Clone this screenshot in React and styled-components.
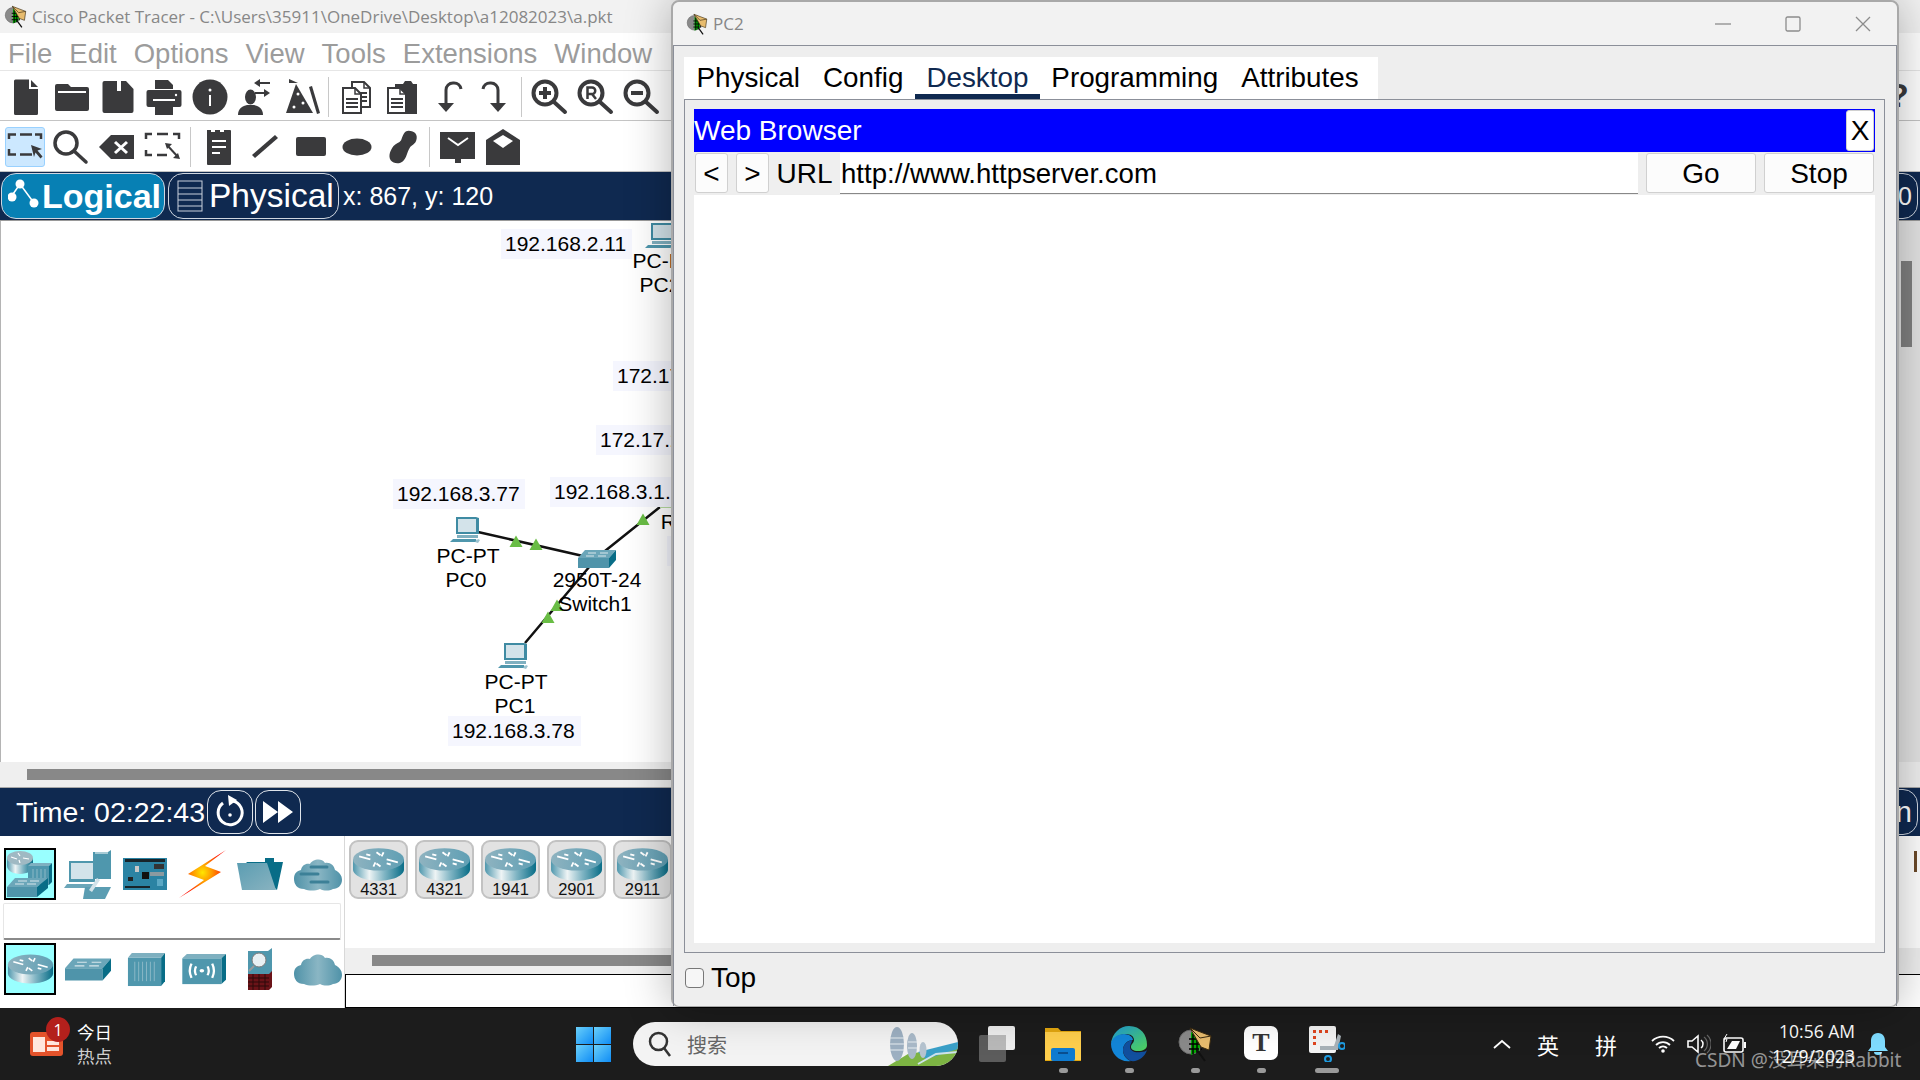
import React from 'react'
import styled, { createGlobalStyle } from 'styled-components'

const NAVY = '#0f2950'
const INK = '#3a3a3c'
const SANS = '"Liberation Sans", Arial, sans-serif'
const UI = '"Open Sans", "Noto Sans", "Noto Sans CJK SC", sans-serif'

const Global = createGlobalStyle`
  html, body { margin: 0; padding: 0; background: #1c1c1c; overflow: hidden; }
  * { box-sizing: border-box; }
`

const Desktop = styled.div`
  position: relative;
  width: 1920px;
  height: 1080px;
  display: flex;
  flex-direction: column;
  overflow: hidden;
  font-family: ${SANS};
`
const MainWindow = styled.div`
  height: 1008px;
  display: flex;
  flex-direction: column;
  background: #fff;
`
const TitleBar = styled.div`
  height: 33px;
  background: #f2f2f2;
  display: flex;
  align-items: center;
  gap: 5px;
  padding: 0 0 0 4px;
  flex: none;
`
const TitleText = styled.span`
  font-family: ${UI};
  font-size: 17px;
  color: #878787;
  white-space: nowrap;
`
const MenuBar = styled.div`
  height: 38px;
  flex: none;
  display: flex;
  align-items: center;
  gap: 17px;
  padding: 4px 0 0 8px;
  font-size: 27.500px;
  color: #9c9c9c;
  border-bottom: 1px solid #e6e6e6;
`
const Toolbar = styled.div`
  height: ${p => p.$h}px;
  flex: none;
  display: flex;
  align-items: center;
  padding: 2px 0 0 ${p => p.$pad}px;
  border-bottom: 1px solid #c4c4c4;
  position: relative;
`
const ToolSlot = styled.div`
  width: 46px;
  height: 40px;
  display: flex;
  align-items: center;
  justify-content: center;
  flex: none;
`
const ToolActive = styled.div`
  width: 40px;
  height: 40px;
  background: #cce8ff;
  border: 1px solid #99d1ff;
  border-radius: 3px;
  display: flex;
  align-items: center;
  justify-content: center;
  overflow: hidden;
`
const Sep = styled.div`
  width: 1px;
  height: 40px;
  background: #c8c8c8;
  margin: 0 ${p => p.$r}px 0 ${p => p.$l}px;
  flex: none;
`
const HelpMark = styled.span`
  position: absolute;
  left: 1888px;
  top: 5px;
  font-size: 34px;
  font-weight: bold;
  color: ${INK};
`
const ModeBar = styled.div`
  height: 48px;
  flex: none;
  background: ${NAVY};
  display: flex;
  align-items: center;
  padding: 0 0 0 1px;
  gap: 3px;
  position: relative;
`
const ModeButton = styled.div`
  height: 46px;
  width: ${p => p.$w}px;
  border-radius: 15px;
  border: 1px solid #cfd6e0;
  background: ${p => (p.$on ? '#0780b4' : NAVY)};
  color: #fff;
  display: flex;
  align-items: center;
  gap: ${p => p.$gap}px;
  padding-left: ${p => p.$pad}px;
  font-size: ${p => (p.$on ? 34 : 33.5)}px;
  font-weight: ${p => (p.$on ? 'bold' : 'normal')};
`
const Coords = styled.span`
  font-size: 25px;
  color: #fff;
  margin-left: 1px;
`
const EdgeButton = styled.div`
  position: absolute;
  left: 1870px;
  top: 1px;
  width: 48px;
  height: 46px;
  border: 1px solid #cfd6e0;
  border-radius: 15px;
  color: #fff;
  font-size: ${p => p.$fs}px;
  display: flex;
  align-items: center;
  justify-content: flex-end;
  padding-right: 5px;
`
const Workspace = styled.div`
  height: 542px;
  flex: none;
  display: flex;
  border-top: 1px solid #9a9a9a;
`
const Canvas = styled.div`
  position: relative;
  flex: 1;
  background: #fff;
  border-left: 1px solid #b4b4b4;
  overflow: hidden;
`
const VScroll = styled.div`
  width: 22px;
  flex: none;
  background: #e3e3e3;
  padding: 40px 8px 0 3px;
`
const VThumb = styled.div`
  height: 86px;
  background: #808080;
`
const HScroll = styled.div`
  height: ${p => p.$h}px;
  flex: none;
  background: #efefef;
  padding: ${p => p.$top}px 22px 0 ${p => p.$left}px;
  border-bottom: ${p => p.$line};
`
const HThumb = styled.div`
  height: 11px;
  background: #888;
`
const Links = styled.svg`
  position: absolute;
  left: -1px;
  top: -221px;
  width: 700px;
  height: 760px;
  pointer-events: none;
`
const IpLabel = styled.div`
  position: absolute;
  left: ${p => p.$x - 1}px;
  top: ${p => p.$y - 221}px;
  width: ${p => p.$w}px;
  height: 30px;
  padding-left: 4px;
  background: #f5f6fe;
  font-size: 21px;
  line-height: 30px;
  color: #000;
  white-space: nowrap;
`
const NodeText = styled.div`
  position: absolute;
  left: ${p => p.$cx - 1}px;
  top: ${p => p.$cy - 221 - 12}px;
  transform: translateX(-50%);
  font-size: 21px;
  line-height: 24px;
  color: #000;
  white-space: nowrap;
`
const NodeIcon = styled.div`
  position: absolute;
  left: ${p => p.$x - 1}px;
  top: ${p => p.$y - 221}px;
  line-height: 0;
`
const TimeBar = styled.div`
  height: 48px;
  flex: none;
  background: ${NAVY};
  display: flex;
  align-items: center;
  padding-left: 16px;
  gap: 2px;
  font-size: 28.500px;
  color: #fff;
  position: relative;
`
const RoundButton = styled.div`
  width: 46px;
  height: 44px;
  border: 1px solid #dfe4ea;
  border-radius: 14px;
  display: flex;
  align-items: center;
  justify-content: center;
`
const Palette = styled.div`
  flex: 1;
  display: flex;
  position: relative;
  background: #fff;
`
const PaletteLeft = styled.div`
  width: 345px;
  flex: none;
  display: flex;
  flex-direction: column;
  padding: 12px 3px 0 3px;
  gap: 3px;
  border-right: 1px solid #d8d8d8;
`
const IconRow = styled.div`
  display: grid;
  grid-template-columns: repeat(6, 57.500px);
  height: 52px;
  margin-left: 1px;
`
const IconCell = styled.div`
  display: flex;
  align-items: center;
  justify-content: center;
  width: 52px;
  height: 52px;
  background: ${p => (p.$on ? '#99ffff' : 'transparent')};
  border: ${p => (p.$on ? '2px solid #000' : 'none')};
`
const SearchField = styled.div`
  height: 37px;
  background: #fff;
  border: 1px solid #e6e6e6;
  border-bottom: 2px solid #8a8a8a;
  border-radius: 2px;
`
const PaletteRight = styled.div`
  flex: 1;
  display: flex;
  flex-direction: column;
`
const ModelRow = styled.div`
  height: 112px;
  display: flex;
  gap: 7px;
  padding: 4px 0 0 4px;
`
const ModelButton = styled.div`
  width: 59px;
  height: 59px;
  background: #e2e2e2;
  border: 2px solid #c2c2c2;
  border-radius: 9px;
  display: flex;
  flex-direction: column;
  align-items: center;
  padding-top: 5px;
  font-size: 16.500px;
  line-height: 15px;
  color: #111;
  gap: 0;
`
const BlackBox = styled.div`
  height: 34px;
  border-top: 1px solid #000;
  border-left: 1px solid #000;
  border-bottom: 1px solid #000;
`
const EdgeTick = styled.div`
  position: absolute;
  left: 1914px;
  top: 15px;
  width: 3px;
  height: 21px;
  background: #6b4a2a;
`
const PcWindow = styled.div`
  position: absolute;
  left: 671px;
  top: 0;
  width: 1228px;
  height: 1007px;
  background: #eee;
  border: 2px solid #a9a9a9;
  border-bottom-width: 1px;
  border-radius: 8px;
  box-shadow: 0 0 46px rgba(0, 0, 0, 0.3);
  display: flex;
  flex-direction: column;
`
const PcTitle = styled.div`
  height: 44px;
  flex: none;
  background: #f2f2f2;
  border-bottom: 1px solid #8b8f99;
  border-radius: 7px 7px 0 0;
  display: flex;
  align-items: center;
  padding-left: 13px;
  gap: 5px;
`
const WinControls = styled.div`
  margin-left: auto;
  display: flex;
  align-items: center;
  margin-right: 26px;
  gap: 54px;
`
const PcBody = styled.div`
  flex: 1;
  display: flex;
  flex-direction: column;
  padding: 11px 11px 0 10px;
  border-left: 1px solid #8b8f99;
  border-right: 1px solid #8b8f99;
`
const Tabs = styled.div`
  height: 42px;
  width: 694px;
  flex: none;
  background: #fff;
  display: flex;
  padding-left: 1px;
`
const Tab = styled.div`
  height: 42px;
  padding: 0 11.500px;
  font-size: 27.800px;
  line-height: 42px;
  color: ${p => (p.$on ? NAVY : '#000')};
  border-bottom: ${p => (p.$on ? `5px solid ${NAVY}` : 'none')};
`
const Panel = styled.div`
  height: 854px;
  flex: none;
  border: 1px solid #8b8f99;
  padding: 9px;
  display: flex;
  flex-direction: column;
`
const BrowserHead = styled.div`
  height: 43px;
  flex: none;
  background: #0000ff;
  color: #fff;
  font-size: 28px;
  display: flex;
  align-items: center;
  padding-right: 1px;
`
const CloseButton = styled.div`
  margin-left: auto;
  width: 28px;
  height: 41px;
  background: #fff;
  border: 1px solid #d0d0d0;
  border-radius: 3px;
  color: #000;
  font-size: 28px;
  display: flex;
  align-items: center;
  justify-content: center;
`
const UrlRow = styled.div`
  height: 43px;
  flex: none;
  display: flex;
  padding: 1px 1px 0 1px;
  font-size: 28px;
`
const PushButton = styled.div`
  width: ${p => p.$w}px;
  height: 40px;
  margin-right: ${p => p.$mr || 0}px;
  flex: none;
  background: #fcfcfc;
  border: 1px solid #d0d0d0;
  border-radius: 3px;
  display: flex;
  align-items: center;
  justify-content: center;
  color: #000;
  padding-top: 2px;
`
const UrlLabel = styled.div`
  width: 71px;
  margin-left: -8px;
  flex: none;
  height: 41px;
  background: #efefef;
  display: flex;
  align-items: center;
  justify-content: center;
`
const UrlInput = styled.div`
  flex: 1;
  height: 41px;
  background: #fff;
  border-bottom: 1px solid #888;
  margin-right: 8px;
  padding: 2px 0 0 1px;
  display: flex;
  align-items: center;
  font-size: 27.600px;
`
const Page = styled.div`
  flex: 1;
  background: #fff;
`
const PcFooter = styled.div`
  flex: 1;
  display: flex;
  align-items: center;
  gap: 7px;
  font-size: 28px;
  color: #000;
  padding: 0 0 4px 1px;
`
const Check = styled.div`
  width: 19px;
  height: 20px;
  background: #f6f6f6;
  border: 1px solid #777;
  border-radius: 4px;
`
const Taskbar = styled.div`
  height: 72px;
  flex: none;
  background: #1c1c1c;
  display: flex;
  align-items: center;
  padding-left: 30px;
  color: #fff;
`
const NewsWidget = styled.div`
  width: 82px;
  flex: none;
  display: flex;
  gap: 14px;
  position: relative;
  align-items: center;
`
const Badge = styled.span`
  position: absolute;
  left: 16px;
  top: -3px;
  width: 24px;
  height: 25px;
  border-radius: 50%;
  background: #b3201c;
  color: #fff;
  font-size: 16px;
  font-family: ${UI};
  display: flex;
  align-items: center;
  justify-content: center;
`
const NewsText = styled.div`
  font-family: "Noto Sans CJK SC", sans-serif;
  font-size: 17.500px;
  line-height: 24px;
  white-space: nowrap;
`
const NewsSub = styled.div`
  color: #cfcfcf;
`
const StartSlot = styled.div`
  margin-left: 464px;
  line-height: 0;
  flex: none;
`
const SearchPill = styled.div`
  margin-left: 22px;
  width: 325px;
  height: 44px;
  flex: none;
  background: #f3f3f3;
  border-radius: 22px;
  display: flex;
  align-items: center;
  padding-left: 15px;
  gap: 15px;
  overflow: hidden;
  color: #666;
  font-family: "Noto Sans CJK SC", sans-serif;
  font-size: 20px;
`
const SearchArt = styled.div`
  margin-left: auto;
  line-height: 0;
`
const TaskIcons = styled.div`
  margin-left: 6px;
  display: flex;
  flex: none;
`
const TaskSlot = styled.div`
  width: 66px;
  height: 72px;
  padding-top: 18px;
  display: flex;
  flex-direction: column;
  align-items: center;
  gap: 6px;
`
const TaskDot = styled.span`
  width: ${p => p.$w || 9}px;
  height: 5px;
  border-radius: 3px;
  background: ${p => (p.$hide ? 'transparent' : '#9a9a9a')};
`
const TextTile = styled.div`
  width: 34px;
  height: 34px;
  background: #fff;
  border-radius: 7px;
  color: #333;
  font-family: "Liberation Serif", serif;
  font-size: 26px;
  line-height: 34px;
  text-align: center;
  font-weight: bold;
  margin-bottom: 2px;
`
const Tray = styled.div`
  margin-left: auto;
  display: flex;
  align-items: center;
  padding-right: 32px;
`
const TraySlot = styled.div`
  width: ${p => p.$w}px;
  margin-left: ${p => p.$ml || 0}px;
  display: flex;
  align-items: center;
  justify-content: center;
  font-family: "Noto Sans CJK SC", sans-serif;
  font-size: 22px;
  line-height: 0;
`
const TrayGlyph = styled.span`
  line-height: 28px;
`
const Clock = styled.div`
  width: 102px;
  text-align: right;
  font-family: ${UI};
  font-size: 17.500px;
  line-height: 25px;
  margin-top: -1px;
`
const Watermark = styled.div`
  position: absolute;
  left: 1695px;
  top: 1047px;
  font-family: "Noto Sans", "Noto Sans CJK SC", sans-serif;
  font-size: 19px;
  line-height: 26px;
  color: rgba(255, 255, 255, 0.55);
  white-space: nowrap;
`

const Gradients = () => (
  <svg width="0" height="0" style={{ position: 'absolute' }}>
    <defs>
      <linearGradient id="cyl" x1="0" x2="1" y1="0" y2="0">
        <stop offset="0" stopColor="#4f97ad" />
        <stop offset="0.32" stopColor="#eef4f5" />
        <stop offset="0.62" stopColor="#7fb4c3" />
        <stop offset="1" stopColor="#086d87" />
      </linearGradient>
      <linearGradient id="cylTop" x1="0" x2="1" y1="0" y2="0">
        <stop offset="0" stopColor="#8fb3c0" />
        <stop offset="1" stopColor="#5f9fb4" />
      </linearGradient>
      <linearGradient id="teal" x1="0" x2="1" y1="0" y2="1">
        <stop offset="0" stopColor="#5b9db2" />
        <stop offset="1" stopColor="#89b3c0" />
      </linearGradient>
      <linearGradient id="cloudFill" x1="0" x2="1" y1="0" y2="0">
        <stop offset="0" stopColor="#4f92a8" />
        <stop offset="0.5" stopColor="#8ab6c4" />
        <stop offset="1" stopColor="#4f92a8" />
      </linearGradient>
      <radialGradient id="bolt" cx="0.5" cy="0.47" r="0.5">
        <stop offset="0" stopColor="#ffe600" />
        <stop offset="0.4" stopColor="#ff9900" />
        <stop offset="1" stopColor="#ff0d00" />
      </radialGradient>
      <linearGradient id="edgeA" x1="0" x2="1" y1="0" y2="1">
        <stop offset="0" stopColor="#1f9bd8" />
        <stop offset="1" stopColor="#50d35a" />
      </linearGradient>
      <linearGradient id="startBlue" x1="0" x2="1" y1="0" y2="1">
        <stop offset="0" stopColor="#6ad0fa" />
        <stop offset="1" stopColor="#0f8cf5" />
      </linearGradient>
    </defs>
  </svg>
)

const Glyph = ({ children }) => (
  <svg viewBox="0 0 40 40" width="40" height="40" fill={INK} style={{ flex: 'none' }}>{children}</svg>
)
const Line = props => <path fill="none" stroke={INK} {...props} />

const toolsA = [
  <><path d="M8 4a1.500 1.500 0 0 1 1.500-1.500H23v9.500h9v24.500a1.500 1.500 0 0 1-1.500 1.500h-21A1.500 1.500 0 0 1 8 36.500Z" /><path d="M25 3l7 7h-7z" /></>,
  <><path d="M3 9a2 2 0 0 1 2-2h11l3 3h16a2 2 0 0 1 2 2v20a2 2 0 0 1-2 2H5a2 2 0 0 1-2-2z" /><rect x="6" y="14" width="28" height="2" fill="#fff" /></>,
  <><path d="M6.500 4H28l7.500 8v22a2 2 0 0 1-2 2h-27a2 2 0 0 1-2-2V6a2 2 0 0 1 2-2z" /><rect x="19" y="4" width="4" height="10" fill="#fff" /></>,
  <><path d="M11 3h13l5 5v4H11z" /><rect x="2.500" y="13" width="35" height="17" rx="2" /><rect x="9" y="22" width="22" height="2" fill="#fff" /><rect x="11" y="25" width="18" height="13" /><circle cx="32" cy="18" r="1.200" fill="#fff" /></>,
  <><circle cx="20" cy="20" r="17.500" /><rect x="19" y="18" width="2" height="11" fill="#fff" /><circle cx="20" cy="13" r="1.500" fill="#fff" /></>,
  <><ellipse cx="14.500" cy="20" rx="5.500" ry="7.500" /><path d="M2 38c0-7 5-9 9-10h7c4 1 9 3 9 10z" /><path d="M18 6l6-4v3h10v2H24v3zM34 16l-6-4v3H19v2h9v3z" /></>,
  <><path d="M14 7L31 36H4z" /><path d="M16 6L7 2v4z" /><path d="M27 10l3-1 8 27-3 1z" /><circle cx="16" cy="17" r="1.500" fill="#fff" /><circle cx="21" cy="26" r="1.500" fill="#fff" /><circle cx="12" cy="30" r="1.500" fill="#fff" /></>
]
const Doc = ({ x, y, fill = '#fff' }) => (
  <g transform={`translate(${x} ${y})`}>
    <path d="M1 1h12l6 6v19H1z" fill={fill} stroke={INK} strokeWidth="2" />
    <path d="M13 1v6h6" fill="none" stroke={INK} strokeWidth="1.500" />
    <path d="M4 12h12M4 16h12M4 20h12" stroke={INK} strokeWidth="2" />
  </g>
)
const toolsB = [
  <><Doc x="14" y="4" /><Doc x="5" y="10" /></>,
  <><path d="M12 7h8l2-3h6l2 3h4v30H12z" /><Doc x="4" y="10" /></>,
  <><Line d="M32 12a7 7 0 0 0-7-6h-1a7 7 0 0 0-7 7v17" strokeWidth="3" /><path d="M9 26h16l-8 9z" /></>,
  <><Line d="M8 12a7 7 0 0 1 7-6h1a7 7 0 0 1 7 7v17" strokeWidth="3" /><path d="M15 26h16l-8 9z" /></>
]
const Mag = ({ children }) => (
  <>
    <circle cx="15" cy="16" r="11.500" fill="none" stroke={INK} strokeWidth="4" />
    <Line d="M24 25l11 10" strokeWidth="4" strokeLinecap="round" />
    {children}
  </>
)
const toolsC = [
  <Mag><path d="M9 16h12M15 10v12" stroke={INK} strokeWidth="4" /></Mag>,
  <Mag><Line d="M11.500 22V10.500h4.500a3 3 0 0 1 0 6.500h-4.500M16 17l4 5" strokeWidth="2.500" /></Mag>,
  <Mag><path d="M9 16h12" stroke={INK} strokeWidth="4" /></Mag>
]
const toolsD = [
  <><Line d="M4 12V7.500h7M15 7.500h12M30 7.500h6v4.500M4 22v5.500h7M15 27.500h12" strokeWidth="2.500" /><path d="M26 18l11 4-4.500 1.500 5 6-2 2-5-6-1.500 4.500z" /></>,
  <><circle cx="15" cy="16" r="11" fill="none" stroke={INK} strokeWidth="3.500" /><Line d="M23 24l12 11" strokeWidth="3.500" strokeLinecap="round" /></>,
  <><path d="M2 20L14 8h23v24H14z" /><path d="M18 15l12 11M30 15L18 26" stroke="#fff" strokeWidth="3" /></>,
  <><Line d="M3 12V7h6M14 7h11M30 7h6v5M3 23v5h6M14 28h10" strokeWidth="2.500" /><Line d="M24 18l11 12" strokeWidth="2" /><path d="M22 16l7 1-5 5zM37 32l-7-1 5-5z" /></>
]
const toolsE = [
  <><path d="M8 3h4v2h4V3h5v2h4V3h6a1 1 0 0 1 1 1v33a1 1 0 0 1-1 1H9a1 1 0 0 1-1-1V4z" /><path d="M13 14h14M13 20h14M13 26h8" stroke="#fff" strokeWidth="2" /></>,
  <path d="M32 10l3 3-23 20-3-3z" transform="translate(-2 -2)" />,
  <rect x="5" y="10" width="30" height="19" rx="2" />,
  <ellipse cx="20" cy="20" rx="14.500" ry="8.500" />,
  <path d="M26 3c6 0 10 4 8 10-1 4-5 5-7 8-3 5-3 10-7 14-3 3-10 3-13-1-3-5 0-11 3-15 3-3 6-3 8-6 2-5 3-10 8-10z" transform="translate(1 1) scale(0.95)" />
]
const toolsF = [
  <><path d="M3 5h35v27H24v4h-6v-4H3z" /><path d="M11 11l10 7 10-7" fill="none" stroke="#fff" strokeWidth="2" /></>,
  <><path d="M3 13L20 2l17 11v25H3z" /><path d="M10 14L20 8l10 6-10 7z" fill="#fff" /></>
]

const PtIcon = ({ size }) => (
  <svg viewBox="0 0 36 36" width={size} height={size}>
    <circle cx="14" cy="16" r="12" fill="#8a8a8a" stroke="#6a6a6a" />
    <path d="M14 6l11 6-3 13-8 4z" fill="#0a0" />
    <path d="M16 8v20M20 10v17M24 12v12M12 13h13M12 18h12M12 23h10" stroke="#000" strokeWidth="1.400" />
    <path d="M20 24l8 11" stroke="#111" strokeWidth="2" />
    <path d="M13 2l21 8-2 14-8-3-7-12z" fill="#e8bc6e" stroke="#3a2a10" strokeWidth="1" />
    <path d="M13 2l10 10 11-2" fill="none" stroke="#3a2a10" strokeWidth="1" />
  </svg>
)
const PcArt = ({ w = 30, h = 27 }) => (
  <svg viewBox="0 0 30 27" width={w} height={h}>
    <path d="M6 0h20l3 1v16H6z" fill="#3f8ba3" />
    <rect x="8" y="2" width="18" height="13" fill="#d3e3ea" />
    <path d="M7 18h21v3H7z" fill="#7fb0c0" />
    <path d="M3 22h23l1 3H0z" fill="#4f97ad" />
    <path d="M25 25l3-3 2 1-2 3z" fill="#9cc2ce" />
  </svg>
)
const SwitchArt = ({ w = 38, h = 18 }) => (
  <svg viewBox="0 0 38 18" width={w} height={h}>
    <path d="M7 0h31L31 8H0z" fill="#6ba6b9" />
    <path d="M0 8h31v10H0z" fill="#4f94aa" />
    <path d="M31 8l7-8v10l-7 8z" fill="#086d87" />
    <path d="M10 3h8M22 3h8M8 6h8M20 6h8" stroke="#d8e6eb" strokeWidth="1" />
  </svg>
)
const RouterArt = ({ w = 52, h = 34 }) => (
  <svg viewBox="0 0 52 34" width={w} height={h}>
    <path d="M1 12v10c0 6 11 11 25 11s25-5 25-11V12Z" fill="url(#cyl)" />
    <ellipse cx="26" cy="12" rx="25" ry="11" fill="url(#cylTop)" />
    <path d="M7 9l11 3M14 7l4 1M45 15l-11-3M38 17l-4-1M24 5l4 3M28 19l-4-3M31 5l-2 4M21 19l2-4" stroke="#fff" strokeWidth="1.800" fill="none" />
  </svg>
)
const Cloud = ({ bars }) => (
  <svg viewBox="0 0 48 34" width="48" height="34">
    <path d="M10 32C3 32 0 27 0 22c0-6 3-8 7-9 1-5 5-7 9-6 2-4 11-7 15-1 5-1 9 2 10 7 4 2 7 5 7 10 0 5-4 9-9 9-4 2-9 2-13 0-5 2-11 2-16 0z" fill="url(#cloudFill)" />
    {bars && <path d="M17 10h16M7 17h17M17 25h17" stroke="#3c8097" strokeWidth="3" strokeLinecap="round" />}
  </svg>
)
const Box3d = ({ children, w = 40, h = 36 }) => (
  <svg viewBox="0 0 40 36" width={w} height={h} preserveAspectRatio="none">
    <path d="M2 6l4-5h34l-4 5z" fill="#7eb0c0" />
    <path d="M36 6l4-5v29l-4 5z" fill="#086d87" />
    <rect x="2" y="6" width="34" height="29" fill="#4f97ad" />
    {children}
  </svg>
)

const palTop = [
  <svg viewBox="0 0 48 48" width="48" height="48">
    <path d="M1 8v8c0 4.400 5.800 8 13 8s13-3.600 13-8V8z" fill="url(#cyl)" />
    <ellipse cx="14" cy="8" rx="13" ry="7" fill="#9fb9c3" />
    <path d="M5 7l6 2M23 9l-6-1M12 3l2 3M14 13l-1-3" stroke="#fff" strokeWidth="1.200" />
    <g transform="translate(22 13)"><path d="M0 3l3-3h21l-3 3z" fill="#7eb0c0" /><path d="M21 3l3-3v19l-3 3z" fill="#086d87" /><rect y="3" width="21" height="19" fill="#4f97ad" /><path d="M5 6v13M9 6v13M13 6v13M17 6v13" stroke="#8bb8c6" /></g>
    <path d="M9 28h33l-11 9H1z" fill="#6ba6b9" />
    <path d="M1 37h30v10H1z" fill="#4f94aa" />
    <path d="M31 37l11-9v10l-11 9z" fill="#086d87" />
    <path d="M12 31h9M24 31h9M9 34h9M21 34h9" stroke="#d8e6eb" />
  </svg>,
  <svg viewBox="0 0 48 50" width="48" height="50">
    <path d="M29 3h15l3-2v29H29z" fill="#4f97ad" />
    <path d="M31 4h13" stroke="#a8cbd5" strokeWidth="2" />
    <rect x="5" y="12" width="26" height="21" fill="#4f97ad" />
    <rect x="7" y="14" width="22" height="16" fill="#d3e3ea" />
    <path d="M3 35h26l2 4H0z" fill="#6ba6b9" />
    <path d="M21 38h26l-6 12H19z" fill="#5b9db2" />
    <path d="M25 41l8-12 3 2-8 12z" fill="#d3e3ea" />
  </svg>,
  <svg viewBox="0 0 44 32" width="44" height="32">
    <rect width="44" height="32" fill="#2b83a3" />
    <rect x="2" y="1" width="40" height="3" fill="#18242a" />
    <rect x="2" y="28" width="25" height="2" fill="#18242a" />
    <rect x="19" y="14" width="7" height="7" fill="#111" />
    <rect x="31" y="6" width="10" height="5" fill="#333" />
    <rect x="27" y="14" width="14" height="4" fill="#8b9aa0" />
    <rect x="12" y="8" width="4" height="6" fill="#c8c8c8" />
    <rect x="5" y="19" width="5" height="4" fill="#222" />
    <rect x="34" y="21" width="6" height="7" fill="#5ba8c4" />
  </svg>,
  <svg viewBox="0 0 48 48" width="48" height="48">
    <path d="M47 0L9 24l16 6L0 48l42-26-16-6z" fill="url(#bolt)" />
  </svg>,
  <svg viewBox="0 0 46 34" width="46" height="34">
    <path d="M9 5h19V1h9v4h9l-6 28z" fill="#086d87" />
    <path d="M0 6h30l9 27H5z" fill="url(#teal)" />
  </svg>,
  <Cloud bars />
]
const palBottom = [
  <RouterArt w={47} h={32} />,
  <SwitchArt w={46} h={23} />,
  <Box3d w={39} h={35}><path d="M9 10v20M13 10v20M17 10v20M21 10v20M25 10v20M29 10v20" stroke="#8bb8c6" /></Box3d>,
  <Box3d w={46} h={32}><path d="M10 12q-3 8 0 16M14 15q-2 5 0 10M28 12q3 8 0 16M24 15q2 5 0 10" stroke="#fff" strokeWidth="2" fill="none" /><circle cx="19" cy="20" r="2" fill="#fff" /></Box3d>,
  <svg viewBox="0 0 26 42" width="26" height="42">
    <path d="M1 3h20l4-3v28H1z" fill="#4f97ad" />
    <circle cx="12" cy="12" r="7" fill="#e8f0f3" stroke="#7a7a7a" />
    <path d="M7 18l-5 5" stroke="#999" strokeWidth="2" />
    <path d="M1 26h21l3-3v16l-3 3H1z" fill="#6b1318" />
    <path d="M1 30h21M1 34h21M1 38h21M6 26v16M12 26v16M18 26v16" stroke="#2d0a0b" />
  </svg>,
  <Cloud />
]
const models = ['4331', '4321', '1941', '2901', '2911']
const tabs = ['Physical', 'Config', 'Desktop', 'Programming', 'Attributes']
const menus = ['File', 'Edit', 'Options', 'View', 'Tools', 'Extensions', 'Window']

const Tool = ({ children, on }) => (
  <ToolSlot>{on ? <ToolActive><Glyph>{children}</Glyph></ToolActive> : <Glyph>{children}</Glyph>}</ToolSlot>
)
const many = list => list.map((icon, i) => <Tool key={i}>{icon}</Tool>)

const Triangle = ({ x, y }) => <path d={`M${x} ${y - 6.500}l6.500 11.500h-13z`} fill="#69bd45" />

const Network = () => (
  <>
    <Links viewBox="0 0 700 760">
      <path d="M478 532L583 556M605 551L660 507M525 643L590 566" stroke="#111" strokeWidth="2.500" fill="none" />
      <path d="M660 507h12" stroke="#b8dca0" strokeWidth="2" />
      <Triangle x={516} y={542} />
      <Triangle x={536} y={545} />
      <Triangle x={643} y={520} />
      <Triangle x={548} y={618} />
      <Triangle x={557} y={606} />
    </Links>
    <IpLabel $x={501} $y={229} $w={131}>192.168.2.11</IpLabel>
    <IpLabel $x={613} $y={361} $w={70}>172.17.1.1</IpLabel>
    <IpLabel $x={596} $y={425} $w={90}>172.17.2.1</IpLabel>
    <IpLabel $x={393} $y={479} $w={132}>192.168.3.77</IpLabel>
    <IpLabel $x={550} $y={477} $w={130}>192.168.3.1.</IpLabel>
    <IpLabel $x={667} $y={536} $w={40}>172.17.1.2</IpLabel>
    <IpLabel $x={448} $y={716} $w={133}>192.168.3.78</IpLabel>
    <NodeIcon $x={645} $y={223}><PcArt /></NodeIcon>
    <NodeIcon $x={450} $y={517}><PcArt /></NodeIcon>
    <NodeIcon $x={498} $y={643}><PcArt /></NodeIcon>
    <NodeIcon $x={578} $y={550}><SwitchArt /></NodeIcon>
    <NodeText $cx={664} $cy={261}>PC-PT</NodeText>
    <NodeText $cx={660} $cy={285}>PC2</NodeText>
    <NodeText $cx={468} $cy={556}>PC-PT</NodeText>
    <NodeText $cx={466} $cy={580}>PC0</NodeText>
    <NodeText $cx={597} $cy={580}>2950T-24</NodeText>
    <NodeText $cx={595} $cy={604}>Switch1</NodeText>
    <NodeText $cx={516} $cy={682}>PC-PT</NodeText>
    <NodeText $cx={515} $cy={706}>PC1</NodeText>
    <NodeText $cx={698} $cy={522}>Router0</NodeText>
  </>
)

const WinGlyph = ({ d, stroke = '#8c8c8c' }) => (
  <svg width="16" height="16" viewBox="0 0 16 16"><path d={d} fill="none" stroke={stroke} strokeWidth="1.300" /></svg>
)

const PcDialog = () => (
  <PcWindow>
    <PcTitle>
      <PtIcon size={22} />
      <TitleText>PC2</TitleText>
      <WinControls>
        <WinGlyph d="M0 8h16" />
        <WinGlyph d="M2.500 1h11a1.500 1.500 0 0 1 1.500 1.500v11a1.500 1.500 0 0 1-1.500 1.500h-11A1.500 1.500 0 0 1 1 13.500v-11A1.500 1.500 0 0 1 2.500 1z" />
        <WinGlyph d="M1 1l14 14M15 1L1 15" />
      </WinControls>
    </PcTitle>
    <PcBody>
      <Tabs>{tabs.map(t => <Tab key={t} $on={t === 'Desktop'}>{t}</Tab>)}</Tabs>
      <Panel>
        <BrowserHead>Web Browser<CloseButton>X</CloseButton></BrowserHead>
        <UrlRow>
          <PushButton $w={33} $mr={8}>&lt;</PushButton>
          <PushButton $w={33} $mr={8}>&gt;</PushButton>
          <UrlLabel>URL</UrlLabel>
          <UrlInput>http://www.httpserver.com</UrlInput>
          <PushButton $w={110} $mr={8}>Go</PushButton>
          <PushButton $w={110}>Stop</PushButton>
        </UrlRow>
        <Page />
      </Panel>
      <PcFooter><Check />Top</PcFooter>
    </PcBody>
  </PcWindow>
)

const Tasks = () => (
  <TaskIcons>
    <TaskSlot>
      <svg width="36" height="36" viewBox="0 0 36 36">
        <rect x="0" y="9" width="27" height="27" rx="2" fill="#5c5c5c" />
        <rect x="9" y="0" width="27" height="24" rx="2" fill="#eee" />
        <rect x="9" y="9" width="18" height="15" fill="#b9b9b9" />
      </svg>
      <TaskDot $hide />
    </TaskSlot>
    <TaskSlot>
      <svg width="36" height="36" viewBox="0 0 36 36">
        <path d="M0 2h13l3 3h20v30H0z" fill="#e3a70f" />
        <rect y="6" width="36" height="28" fill="#ffcf4d" />
        <rect x="6" y="22" width="24" height="13" rx="2" fill="#0f7bd0" />
        <rect x="13" y="26" width="10" height="2" fill="#0a4f90" />
      </svg>
      <TaskDot />
    </TaskSlot>
    <TaskSlot>
      <svg width="36" height="36" viewBox="0 0 36 36">
        <path d="M18 0C30 0 36 9 36 19c0 4-4 6-9 6-5 0-7-2-7-4 0-3 3-4 3-7 0-4-4-6-8-6C8 8 1 13 0 18 1 7 9 0 18 0z" fill="url(#edgeA)" />
        <path d="M0 18c0-6 7-10 13-10 5 0 9 3 9 6-5 0-10 4-10 10 0 5 3 9 8 11C9 37 0 28 0 18z" fill="#1386d8" />
        <path d="M12 24c0-5 4-9 9-10 0 3-2 4-2 7 0 4 5 6 11 5 3 0 5-1 6-2-2 7-9 12-16 11-4-2-8-6-8-11z" fill="#114f9e" />
      </svg>
      <TaskDot />
    </TaskSlot>
    <TaskSlot><PtIcon size={36} /><TaskDot /></TaskSlot>
    <TaskSlot>
      <TextTile>T</TextTile>
      <TaskDot />
    </TaskSlot>
    <TaskSlot>
      <svg width="36" height="36" viewBox="0 0 36 36">
        <rect x="0" y="0" width="27" height="27" rx="2" fill="#f4f4f4" />
        <path d="M4 4h3v3H4zM10 4h3v3h-3zM16 4h3v3h-3zM4 10h3v3H4zM4 16h3v3H4z" fill="#e0451f" />
        <path d="M11 20h14l4-12 3 2-3 14H11z" fill="#a9b2b8" />
        <circle cx="33" cy="20" r="3" fill="none" stroke="#1e9be0" strokeWidth="2" />
        <circle cx="19" cy="33" r="3" fill="none" stroke="#1e9be0" strokeWidth="2" />
      </svg>
      <TaskDot $w={24} />
    </TaskSlot>
  </TaskIcons>
)

export default function App() {
  return (
    <Desktop>
      <Global />
      <Gradients />
      <MainWindow>
        <TitleBar>
          <PtIcon size={23} />
          <TitleText>Cisco Packet Tracer - C:\Users\35911\OneDrive\Desktop\a12082023\a.pkt</TitleText>
        </TitleBar>
        <MenuBar>{menus.map(m => <span key={m}>{m}</span>)}</MenuBar>
        <Toolbar $h={50} $pad={3}>
          {many(toolsA)}
          <Sep $l={3} $r={5} />
          {many(toolsB)}
          <Sep $l={3} $r={5} />
          {many(toolsC)}
          <HelpMark>?</HelpMark>
        </Toolbar>
        <Toolbar $h={51} $pad={2}>
          <Tool on>{toolsD[0]}</Tool>
          {many(toolsD.slice(1))}
          <Sep $l={4} $r={5} />
          {many(toolsE)}
          <Sep $l={3} $r={4} />
          {many(toolsF)}
        </Toolbar>
        <ModeBar>
          <ModeButton $on $w={164} $pad={6} $gap={0}>
            <svg width="34" height="34" viewBox="0 0 34 34">
              <path d="M12 5L3 18M12 5l14 19" stroke="#fff" strokeWidth="1.500" />
              <circle cx="12" cy="5" r="4.500" fill="#fff" />
              <circle cx="4" cy="18" r="4.500" fill="#fff" />
              <circle cx="26" cy="24" r="4.500" fill="#fff" />
            </svg>
            Logical
          </ModeButton>
          <ModeButton $w={171} $pad={8} $gap={6}>
            <svg width="26" height="32" viewBox="0 0 26 32">
              <rect x="1" y="1" width="24" height="30" fill="none" stroke="#c9d0db" />
              <path d="M1 8h24M1 14h24M1 20h24M1 26h24" stroke="#c9d0db" />
            </svg>
            Physical
          </ModeButton>
          <Coords>x: 867, y: 120</Coords>
          <EdgeButton $fs={25}>0</EdgeButton>
        </ModeBar>
        <Workspace>
          <Canvas><Network /></Canvas>
          <VScroll><VThumb /></VScroll>
        </Workspace>
        <HScroll $h={26} $top={7} $left={27} $line="1px solid #a8a8a8"><HThumb /></HScroll>
        <TimeBar>
          Time: 02:22:43
          <RoundButton>
            <svg width="32" height="36" viewBox="0 0 32 36">
              <path d="M9 9a12 12 0 1 0 10-2" fill="none" stroke="#fff" strokeWidth="3" />
              <path d="M14 1l9 5-8 6z" fill="#fff" />
              <circle cx="16" cy="21" r="1.800" fill="#fff" />
            </svg>
          </RoundButton>
          <RoundButton>
            <svg width="32" height="24" viewBox="0 0 32 24">
              <path d="M1 1l15 11L1 23zM16 1l15 11-15 11z" fill="#fff" />
            </svg>
          </RoundButton>
          <EdgeButton $fs={29}>n</EdgeButton>
        </TimeBar>
        <Palette>
          <PaletteLeft>
            <IconRow>{palTop.map((icon, i) => <IconCell key={i} $on={i === 0}>{icon}</IconCell>)}</IconRow>
            <SearchField />
            <IconRow>{palBottom.map((icon, i) => <IconCell key={i} $on={i === 0}>{icon}</IconCell>)}</IconRow>
          </PaletteLeft>
          <PaletteRight>
            <ModelRow>
              {models.map(m => <ModelButton key={m}><RouterArt w={53} h={35} />{m}</ModelButton>)}
            </ModelRow>
            <HScroll $h={26} $top={7} $left={27} $line="none"><HThumb /></HScroll>
            <BlackBox />
          </PaletteRight>
          <EdgeTick />
        </Palette>
      </MainWindow>
      <Taskbar>
        <NewsWidget>
          <svg width="33" height="24" viewBox="0 0 33 24">
            <rect width="33" height="24" rx="3" fill="#e4532b" />
            <rect x="3" y="5" width="12" height="15" fill="#ffe6dc" />
            <rect x="17" y="9" width="12" height="4" fill="#ffe6dc" />
            <rect x="17" y="15" width="12" height="4" fill="#ffe6dc" />
          </svg>
          <Badge>1</Badge>
          <NewsText>今日<NewsSub>热点</NewsSub></NewsText>
        </NewsWidget>
        <StartSlot>
          <svg width="35" height="35" viewBox="0 0 35 35">
            <rect width="17" height="17" fill="url(#startBlue)" />
            <rect x="18" width="17" height="17" fill="url(#startBlue)" />
            <rect y="18" width="17" height="17" fill="url(#startBlue)" />
            <rect x="18" y="18" width="17" height="17" fill="url(#startBlue)" />
          </svg>
        </StartSlot>
        <SearchPill>
          <svg width="24" height="26" viewBox="0 0 24 26">
            <circle cx="10.500" cy="10.500" r="8.500" fill="none" stroke="#333" strokeWidth="2.500" />
            <path d="M16 17l6 8" stroke="#333" strokeWidth="2.500" />
          </svg>
          搜索
          <SearchArt>
            <svg width="70" height="44" viewBox="0 0 70 44">
              <path d="M0 44l20-12 50-8v20z" fill="#7db443" />
              <path d="M30 30l40-10v7l-32 10z" fill="#3aa0c8" />
              <path d="M30 42l18-10 22-2" stroke="#cfe3ea" strokeWidth="2" fill="none" />
              <ellipse cx="9" cy="22" rx="7" ry="17" fill="#9db0c2" />
              <ellipse cx="24" cy="24" rx="5" ry="13" fill="#a9bac9" />
              <ellipse cx="35" cy="28" rx="3.500" ry="8" fill="#b6c4d0" />
              <path d="M2 16h14M2 22h14M2 28h14M20 20h9M20 26h9" stroke="#e8eef2" />
            </svg>
          </SearchArt>
        </SearchPill>
        <Tasks />
        <Tray>
          <TraySlot $w={43}>
            <svg width="18" height="10" viewBox="0 0 18 10"><path d="M1 9l8-7 8 7" fill="none" stroke="#fff" strokeWidth="1.800" /></svg>
          </TraySlot>
          <TraySlot $w={50}><TrayGlyph>英</TrayGlyph></TraySlot>
          <TraySlot $w={66}><TrayGlyph>拼</TrayGlyph></TraySlot>
          <TraySlot $w={36} $ml={6}>
            <svg width="24" height="18" viewBox="0 0 24 18">
              <path d="M1 6a16 16 0 0 1 22 0M5 10a10 10 0 0 1 14 0M8 13a6 6 0 0 1 8 0" fill="none" stroke="#fff" strokeWidth="1.800" />
              <circle cx="12" cy="16" r="1.800" fill="#fff" />
            </svg>
          </TraySlot>
          <TraySlot $w={36}>
            <svg width="24" height="20" viewBox="0 0 24 20">
              <path d="M1 7h4l6-5v16l-6-5H1z" fill="none" stroke="#fff" strokeWidth="1.600" />
              <path d="M14 6a5 5 0 0 1 0 8" fill="none" stroke="#fff" strokeWidth="1.500" />
              <path d="M17 3a9 9 0 0 1 0 14M20 1a12 12 0 0 1 0 18" fill="none" stroke="#666" strokeWidth="1.200" />
            </svg>
          </TraySlot>
          <TraySlot $w={36}>
            <svg width="24" height="20" viewBox="0 0 24 20">
              <rect x="1" y="4" width="19" height="14" rx="2" fill="none" stroke="#fff" strokeWidth="1.600" />
              <path d="M4 15l5-8h8l-4 8z" fill="#fff" />
              <rect x="21" y="8" width="2" height="6" fill="#fff" />
              <path d="M4 0L1 5h3l-1 3" stroke="#fff" fill="none" />
            </svg>
          </TraySlot>
          <Clock>10:56 AM<br />12/9/2023</Clock>
          <TraySlot $w={20} $ml={13}>
            <svg width="20" height="24" viewBox="0 0 20 24">
              <path d="M10 1c5 0 7 4 7 8v6l3 4H0l3-4V9c0-4 2-8 7-8z" fill="#7fdcff" />
              <path d="M6 20h8a4 3 0 0 1-8 0z" fill="#7fdcff" />
            </svg>
          </TraySlot>
        </Tray>
      </Taskbar>
      <PcDialog />
      <Watermark>CSDN @没耳朵的Rabbit</Watermark>
    </Desktop>
  )
}
